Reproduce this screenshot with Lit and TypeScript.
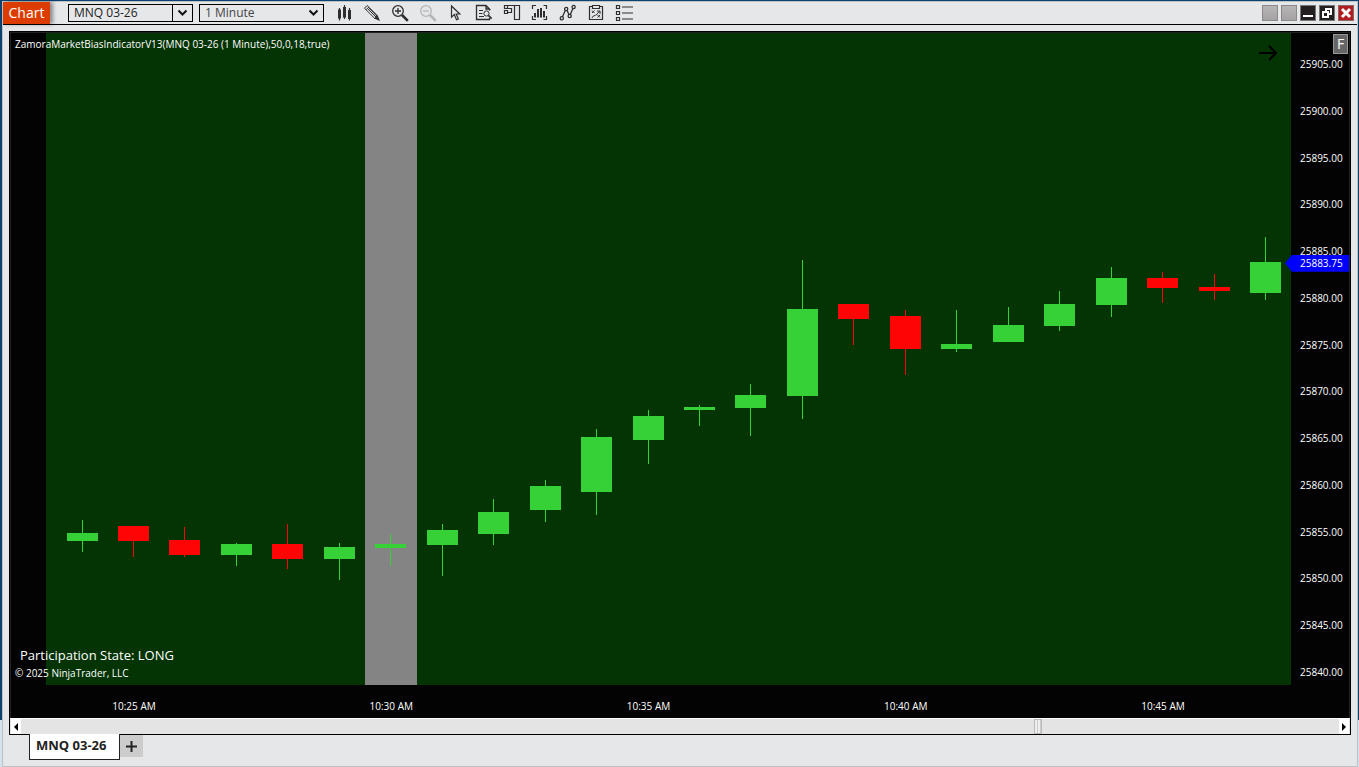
import { LitElement, html, css, svg } from "lit";
import { customElement, property } from "lit/decorators.js";

type Candle = [x: number, top: number, bottom: number, high: number, low: number, up: boolean];

const PLOT_W = 1280;
const PLOT_H = 652;
const BODY_W = 31;

// Body top, body bottom, wick top and wick bottom, in plot units.
const CANDLES: Candle[] = [
  [56, 500, 508, 487, 519, true],
  [107, 493, 508, 493, 524, false],
  [158, 507, 522, 494, 524, false],
  [210, 511, 522, 510, 533, true],
  [261, 511, 526, 491, 536, false],
  [313, 514, 526, 510, 547, true],
  [364, 511, 515, 501, 533, true],
  [416, 497, 512, 491, 543, true],
  [467, 479, 501, 466, 512, true],
  [519, 453, 477, 447, 489, true],
  [570, 404, 459, 396, 482, true],
  [622, 383, 407, 377, 431, true],
  [673, 374, 377, 372, 393, true],
  [724, 362, 375, 351, 403, true],
  [776, 276, 363, 227, 386, true],
  [827, 271, 286, 271, 312, false],
  [879, 283, 316, 277, 342, false],
  [930, 311, 316, 277, 319, true],
  [982, 292, 309, 274, 309, true],
  [1033, 271, 293, 258, 298, true],
  [1085, 245, 272, 234, 284, true],
  [1136, 245, 255, 239, 270, false],
  [1188, 254, 258, 241, 267, false],
  [1239, 229, 260, 204, 267, true],
];

const PRICES = Array.from({ length: 14 }, (_, i) => (25905 - i * 5).toFixed(2));
const TIMES = ["10:25 AM", "10:30 AM", "10:35 AM", "10:40 AM", "10:45 AM"];

const TOOLS = [
  {
    name: "Chart style",
    art: svg`<path fill="currentColor" d="M3 5.5h3v9H3zM8 3h3v10.500H8zM13 6h3v9h-3z"/><path stroke="currentColor" stroke-width="1.200" d="M4.500 4v12.500M9.500 1v14M14.500 4v12.500"/>`,
  },
  {
    name: "Drawing tools",
    art: svg`<path fill="none" stroke="currentColor" d="M1.5 4.2 4.2 1.5 14.5 11.8 11.8 14.5zM3 5.8 5.8 3M4.8 4.8 13.2 13.2M6 4 14 12.2"/><path fill="currentColor" d="m14.6 11.2 2.4 5.8-5.8-2.4z"/>`,
  },
  {
    name: "Zoom in",
    art: svg`<circle cx="7" cy="7" r="5.3" fill="none" stroke="currentColor" stroke-width="1.3"/><path stroke="currentColor" stroke-width="1.3" d="M4 7h6M7 4v6"/><path stroke="currentColor" stroke-width="2.6" d="m11 11 5.8 5.8"/>`,
  },
  {
    name: "Zoom out",
    off: true,
    art: svg`<circle cx="7" cy="7" r="5.3" fill="none" stroke="currentColor" stroke-width="1.3"/><path stroke="currentColor" stroke-width="1.3" d="M4 7h6"/><path stroke="currentColor" stroke-width="2.6" d="m11 11 5.8 5.8"/>`,
  },
  {
    name: "Cursor",
    art: svg`<path fill="none" stroke="currentColor" stroke-width="1.2" d="M4.5 2v11.2l2.800-2.600 2.200 5.200 1.900-.8-2.200-5h3.600z"/>`,
  },
  {
    name: "Data box",
    art: svg`<path fill="none" stroke="currentColor" stroke-width="1.3" d="M14.5 5v1.5M14.5 14v1.5h-13v-14H11L14.5 5H11V1.5"/><path stroke="currentColor" d="M4 6.5h4M4 9.500h3.500M4 12.500h5"/><circle cx="11.5" cy="9.5" r="2.6" fill="none" stroke="currentColor"/><path stroke="currentColor" stroke-width="1.6" d="m13.4 11.4 3.200 3.200"/>`,
  },
  {
    name: "Chart trader",
    art: svg`<path fill="none" stroke="currentColor" stroke-width="1.2" d="M1.5 1.5h3v3h-3zM1.5 6.5h3v3h-3zM4.500 1.500h7M4.500 4.500h4v4h-4M11.500 1.500h5v14h-5z"/>`,
  },
  {
    name: "Chart panel",
    art: svg`<path fill="none" stroke="currentColor" stroke-width="1.2" d="M5 1.5H1.5V5M12.500 1.500h3V5M1.500 12v3.500H5M15.500 12v3.500h-3"/><path fill="currentColor" d="M3 9h2v4.500H3zM6 5h2v8.500H6zM9 4h2v9.500H9zM12 7h2v6.500h-2z"/>`,
  },
  {
    name: "Indicators",
    art: svg`<g fill="none" stroke="currentColor" stroke-width="1.3"><path d="m3.300 13 3.200-7M7.900 6 10 10.700M11.300 10.500 14 4.200"/><circle cx="2.8" cy="14.3" r="1.6"/><circle cx="7.2" cy="5" r="1.6"/><circle cx="10.7" cy="12" r="1.6"/><circle cx="14.6" cy="3" r="1.6"/></g>`,
  },
  {
    name: "Strategies",
    art: svg`<path fill="none" stroke="currentColor" stroke-width="1.2" d="M5 2.5H2.500v13h13v-13H13M5.500 1.500h7v3h-7z"/><path fill="none" stroke="currentColor" d="m5 6.500 2.500 2.500M7.500 6.500 5 9M10.500 11l2.500 2.500M13 11l-2.500 2.500M5 14c.2-2.500 3.500-2 5-3.800L12.500 7M10 7h3v3"/>`,
  },
  {
    name: "Properties",
    art: svg`<path fill="none" stroke="currentColor" stroke-width="1.2" d="M1.5 1.5h3v3h-3zM1.5 7.5h3v3h-3zM1.5 13.5h3v3h-3z"/><path stroke="currentColor" stroke-width="1.2" d="M7 3h11M7 9h11M7 15h11"/>`,
  },
];

@customElement("chart-toolbar")
class ChartToolbar extends LitElement {
  static styles = css`
    :host {
      display: flex;
      align-items: center;
      height: 22px;
      flex: none;
      border-bottom: 1px solid #000;
      font: 12px/16px "Open Sans", "Noto Sans", sans-serif;
    }
    .title {
      align-self: stretch;
      width: 47px;
      box-sizing: border-box;
      margin-right: 18px;
      background: #dc3c00;
      color: #fff;
      font-size: 14px;
      line-height: 21px;
      text-align: center;
      box-shadow: 3px 0 4px #0006;
    }
    .pick {
      position: relative;
      display: flex;
      margin-right: 6px;
    }
    select {
      appearance: none;
      width: 125px;
      height: 18px;
      margin: 0;
      padding: 0 24px 0 5px;
      border: 1px solid #000;
      border-radius: 0;
      background: #e6e7e9;
      color: #222;
      font: inherit;
      line-height: 16px;
    }
    .soft select {
      color: #444;
    }
    .mark {
      position: absolute;
      top: 1px;
      right: 1px;
      width: 19px;
      height: 16px;
      pointer-events: none;
    }
    .split .mark {
      border-left: 1px solid #000;
    }
    button {
      display: flex;
      align-items: center;
      justify-content: center;
      padding: 0;
      border: 0;
      background: none;
      color: #2e2e30;
    }
    .tool {
      width: 28px;
      height: 20px;
    }
    .tool:disabled {
      color: #b4b5b7;
    }
    .space {
      flex: 1;
    }
    .wins {
      display: flex;
      gap: 3px;
      margin-right: 3px;
    }
    .win {
      width: 16px;
      height: 16px;
      border: 1px solid #8a888a;
      background: linear-gradient(#b8b5b7, #a5a2a4);
    }
    .dark {
      border-color: #777;
      background: #231f20;
      color: #fff;
    }
    .close {
      border-color: #8c6464;
      background: #b01c20;
      color: #fff;
    }
  `;

  render() {
    const chevron = html`<svg class="mark" viewBox="0 0 19 16" aria-hidden="true">
      <path fill="none" stroke="#111" stroke-width="2" d="m5.5 5.5 4 4 4-4" />
    </svg>`;
    return html`
      <div class="title">Chart</div>
      <div class="pick split">
        <select aria-label="Instrument"><option>MNQ 03-26</option></select>${chevron}
      </div>
      <div class="pick soft">
        <select aria-label="Interval"><option>1 Minute</option></select>${chevron}
      </div>
      ${TOOLS.map(
        (t) => html`<button class="tool" aria-label=${t.name} ?disabled=${t.off ?? false}>
          <svg width="18" height="18" viewBox="0 0 18 18" aria-hidden="true">${t.art}</svg>
        </button>`
      )}
      <div class="space"></div>
      <div class="wins">
        <button class="win" aria-label="Instrument link"></button>
        <button class="win" aria-label="Interval link"></button>
        <button class="win dark" aria-label="Minimize">
          <svg width="14" height="14"><path fill="currentColor" d="M2 9h10v2H2z" /></svg>
        </button>
        <button class="win dark" aria-label="Restore">
          <svg width="14" height="14">
            <path fill="none" stroke="currentColor" stroke-width="2" d="M6 6V3h5v5H8M3 6h5v5H3z" />
          </svg>
        </button>
        <button class="win close" aria-label="Close">
          <svg width="14" height="14"><path stroke="currentColor" stroke-width="3" d="m3 3 8 8M11 3l-8 8" /></svg>
        </button>
      </div>
    `;
  }
}

@customElement("price-chart")
class PriceChart extends LitElement {
  @property() price = "25883.75";

  static styles = css`
    :host {
      display: grid;
      position: relative;
      grid-template: minmax(0, 1fr) 33px / minmax(0, 1fr) 58px;
      flex: 1;
      min-height: 0;
      border: 1px solid #222;
      border-bottom: 0;
      background: #030303;
      color: #fff;
      font: 10px/16px "Open Sans", "Noto Sans", sans-serif;
    }
    .plot {
      position: relative;
      min-height: 0;
    }
    .canvas {
      position: absolute;
      inset: 0;
      width: 100%;
      height: 100%;
    }
    .over {
      position: absolute;
      inset: 0;
      display: flex;
      flex-direction: column;
      padding: 3px 14px 4px 4px;
      white-space: nowrap;
    }
    .state {
      margin-top: auto;
      padding-left: 5px;
      font-size: 13px;
      line-height: 20px;
    }
    .arrow {
      position: absolute;
      top: 12px;
      right: 13px;
    }
    .axis {
      position: relative;
      display: flex;
      flex-direction: column;
      justify-content: space-between;
      padding: 23px 0 5px 9px;
    }
    .tag {
      position: absolute;
      top: 34%;
      left: -6px;
      right: 0;
      height: 17px;
      padding-left: 15px;
      box-sizing: border-box;
      line-height: 17px;
      background: #00f;
      clip-path: polygon(0 50%, 7px 0, 100% 0, 100% 100%, 7px 100%);
    }
    .times {
      display: flex;
      justify-content: space-between;
      padding: 13px 106px 0 101px;
    }
    .time {
      width: 44px;
      display: flex;
      justify-content: center;
      white-space: nowrap;
    }
    .fixed {
      position: absolute;
      top: 1px;
      right: 1px;
      width: 15px;
      height: 20px;
      padding: 0;
      border: 1px solid #999;
      background: #666;
      color: #fff;
      font: 14px/18px "Open Sans", "Noto Sans", sans-serif;
    }
  `;

  render() {
    return html`
      <div class="plot">
        <svg
          class="canvas"
          viewBox="0 0 ${PLOT_W} ${PLOT_H}"
          preserveAspectRatio="none"
          shape-rendering="crispEdges"
          aria-label="Candlestick chart"
        >
          <rect x="35" width="1245" height=${PLOT_H} fill="#043304" />
          <rect x="354" width="52" height=${PLOT_H} fill="#848484" />
          ${CANDLES.map(
            ([x, top, bottom, high, low, up]) => svg`<g fill=${up ? "#36d136" : "#ff0404"}>
              <rect x=${x + 15} y=${high} width="1" height=${low - high} />
              <rect x=${x} y=${top} width=${BODY_W} height=${bottom - top} />
            </g>`
          )}
        </svg>
        <div class="over">
          <span>ZamoraMarketBiasIndicatorV13(MNQ 03-26 (1 Minute),50,0,18,true)</span>
          <span class="state">Participation State: LONG</span>
          <span>© 2025 NinjaTrader, LLC</span>
        </div>
        <svg class="arrow" width="20" height="16" aria-hidden="true">
          <path fill="none" stroke="#000" stroke-width="2" d="M1 8h17M11 1l7 7-7 7" />
        </svg>
      </div>
      <div class="axis">
        ${PRICES.map((p) => html`<span>${p}</span>`)}
        <div class="tag">${this.price}</div>
      </div>
      <div class="times">${TIMES.map((t) => html`<span class="time">${t}</span>`)}</div>
      <button class="fixed">F</button>
    `;
  }
}

@customElement("app-root")
class AppRoot extends LitElement {
  static styles = css`
    :host {
      display: flex;
      height: 100vh;
      box-sizing: border-box;
      padding: 1px 1px 0 2px;
      background: linear-gradient(#0a4272 0 720px, #d3e4f0 720px);
      font: 12px/16px "Open Sans", "Noto Sans", sans-serif;
    }
    .window {
      display: flex;
      flex-direction: column;
      flex: 1;
      min-width: 0;
      border: 1px solid #bfc0c2;
      background: #e6e7e9;
    }
    .frame {
      display: flex;
      flex-direction: column;
      flex: 1;
      min-height: 0;
      margin: 6px 6px 0;
      border: 1px solid #000;
    }
    .scroll {
      display: flex;
      height: 15px;
      flex: none;
      padding: 0 1px;
      border-top: 1px solid #fff;
      background: #e4e4e4;
    }
    .step {
      display: flex;
      align-items: center;
      justify-content: center;
      width: 10px;
      padding: 0;
      border: 0;
      background: #fff;
    }
    .slide {
      appearance: none;
      flex: 1;
      min-width: 0;
      height: 15px;
      margin: 0;
      background: none;
    }
    .slide::-webkit-slider-thumb {
      appearance: none;
      width: 8px;
      height: 15px;
      box-sizing: border-box;
      border: 1px solid #bbb;
      border-radius: 0;
      background: linear-gradient(90deg, #eee 2px, #ccc 2px 3px, #eee 3px 5px, #ccc 5px 6px, #eee 6px);
    }
    .tabs {
      display: flex;
      align-items: flex-start;
      height: 31px;
      flex: none;
      padding-left: 26px;
    }
    .tab {
      position: relative;
      height: 26px;
      margin-top: -1px;
      padding: 0 13px 4px 6px;
      border: 1px solid #222;
      border-top: 0;
      background: #fff;
      color: #222;
      font: bold 13px/18px "Open Sans", "Noto Sans", sans-serif;
    }
    .add {
      display: flex;
      align-items: center;
      justify-content: center;
      width: 23px;
      height: 22px;
      padding: 0;
      border: 0;
      background: #ccc;
    }
  `;

  render() {
    return html`
      <div class="window">
        <chart-toolbar></chart-toolbar>
        <div class="frame">
          <price-chart></price-chart>
          <div class="scroll">
            <button class="step" aria-label="Scroll left">
              <svg width="4" height="8"><path d="M4 0v8L0 4z" /></svg>
            </button>
            <input class="slide" type="range" aria-label="Chart position" min="0" max="1000" value="773" />
            <button class="step" aria-label="Scroll right">
              <svg width="4" height="8"><path d="M0 0v8l4-4z" /></svg>
            </button>
          </div>
        </div>
        <div class="tabs">
          <button class="tab">MNQ 03-26</button>
          <button class="add" aria-label="Add tab">
            <svg width="11" height="11"><path stroke="#222" stroke-width="2" d="M0 5.5h11M5.5 0v11" /></svg>
          </button>
        </div>
      </div>
    `;
  }
}
